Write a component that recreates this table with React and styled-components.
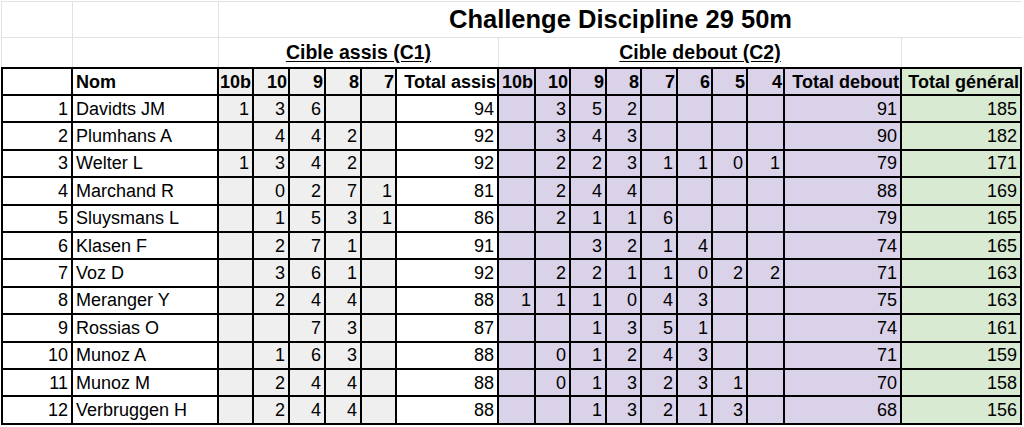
import styled, { createGlobalStyle } from 'styled-components';

const GlobalStyle = createGlobalStyle`
  body {
    margin: 0;
    background: #fff;
    color: #000;
    font-family: "Liberation Sans", Arial, sans-serif;
  }
`;

// column widths, taken from the sheet
const COLS = [72, 146, 35, 36, 36, 36, 35, 102, 37, 35, 36, 35, 36, 35, 35, 37, 117, 120];

const GREY = '#efefef';
const PURPLE = '#d9d2e9';
const GREEN = '#d9ead3';

const FILLS = [
  '#fff', '#fff',
  GREY, GREY, GREY, GREY, GREY,
  '#fff',
  PURPLE, PURPLE, PURPLE, PURPLE, PURPLE, PURPLE, PURPLE, PURPLE, PURPLE,
  GREEN,
];

const HEADERS = [
  '', 'Nom', '10b', '10', '9', '8', '7', 'Total assis',
  '10b', '10', '9', '8', '7', '6', '5', '4', 'Total debout', 'Total général',
];

const ROWS = [
  ['Davidts JM', [1, 3, 6, '', ''], 94, ['', 3, 5, 2, '', '', '', ''], 91, 185],
  ['Plumhans A', ['', 4, 4, 2, ''], 92, ['', 3, 4, 3, '', '', '', ''], 90, 182],
  ['Welter L', [1, 3, 4, 2, ''], 92, ['', 2, 2, 3, 1, 1, 0, 1], 79, 171],
  ['Marchand R', ['', 0, 2, 7, 1], 81, ['', 2, 4, 4, '', '', '', ''], 88, 169],
  ['Sluysmans L', ['', 1, 5, 3, 1], 86, ['', 2, 1, 1, 6, '', '', ''], 79, 165],
  ['Klasen F', ['', 2, 7, 1, ''], 91, ['', '', 3, 2, 1, 4, '', ''], 74, 165],
  ['Voz D', ['', 3, 6, 1, ''], 92, ['', 2, 2, 1, 1, 0, 2, 2], 71, 163],
  ['Meranger Y', ['', 2, 4, 4, ''], 88, [1, 1, 1, 0, 4, 3, '', ''], 75, 163],
  ['Rossias O', ['', '', 7, 3, ''], 87, ['', '', 1, 3, 5, 1, '', ''], 74, 161],
  ['Munoz A', ['', 1, 6, 3, ''], 88, ['', 0, 1, 2, 4, 3, '', ''], 71, 159],
  ['Munoz M', ['', 2, 4, 4, ''], 88, ['', 0, 1, 3, 2, 3, 1, ''], 70, 158],
  ['Verbruggen H', ['', 2, 4, 4, ''], 88, ['', '', 1, 3, 2, 1, 3, ''], 68, 156],
];

const Sheet = styled.div`
  display: grid;
  grid-template-columns: ${COLS.map((w) => `${w}px`).join(' ')};
  grid-template-rows: 37px 29px 29px repeat(12, 27.4px);
  padding: 1px 0 0 1px;
  font-size: 18px;
  line-height: 1;
`;

const TopCell = styled.div`
  display: flex;
  align-items: center;
  justify-content: center;
  grid-column: ${({ $span }) => $span || 'auto'};
  border-right: ${({ $open }) => ($open ? 'none' : '1px solid #e2e2e2')};
  border-top: ${({ $first }) => ($first ? '1px solid #e2e2e2' : 'none')};
  border-bottom: ${({ $first }) => ($first ? '1px solid #e2e2e2' : 'none')};
  border-left: ${({ $edge }) => ($edge ? '1px solid #e2e2e2' : 'none')};
`;

const Title = styled.span`
  font-size: 25.5px;
  font-weight: 700;
`;

const Group = styled.span`
  font-size: 19.5px;
  font-weight: 700;
  text-decoration: underline;
  text-underline-offset: 2px;
`;

const Cell = styled.div`
  display: flex;
  align-items: center;
  justify-content: ${({ $left }) => ($left ? 'flex-start' : 'flex-end')};
  padding: ${({ $head }) => ($head ? '0 1px 0 3px' : '0 3px')};
  background: ${({ $fill }) => $fill};
  border-right: 2px solid #000;
  border-bottom: 2px solid #000;
  border-left: ${({ $edge }) => ($edge ? '2px solid #000' : 'none')};
  border-top: ${({ $head }) => ($head ? '2px solid #000' : 'none')};
  font-weight: ${({ $head }) => ($head ? 700 : 400)};
  white-space: nowrap;
`;

export default function App() {
  return (
    <>
      <GlobalStyle />
      <Sheet>
        <TopCell $first $edge />
        <TopCell $first />
        <TopCell $first $open $span="3 / -1">
          <Title>Challenge Discipline 29 50m</Title>
        </TopCell>

        <TopCell $edge />
        <TopCell />
        <TopCell $span="3 / span 6">
          <Group>Cible assis (C1)</Group>
        </TopCell>
        <TopCell $span="9 / span 9">
          <Group>Cible debout (C2)</Group>
        </TopCell>
        <TopCell $open />

        {HEADERS.map((h, i) => (
          <Cell key={`h${i}`} $head $edge={i === 0} $left={i === 1} $fill={FILLS[i]}>
            {h}
          </Cell>
        ))}

        {ROWS.map(([name, c1, assis, c2, debout, total], r) => {
          const values = [r + 1, name, ...c1, assis, ...c2, debout, total];
          return values.map((v, i) => (
            <Cell key={`${r}-${i}`} $edge={i === 0} $left={i === 1} $fill={FILLS[i]}>
              {v}
            </Cell>
          ));
        })}
      </Sheet>
    </>
  );
}
